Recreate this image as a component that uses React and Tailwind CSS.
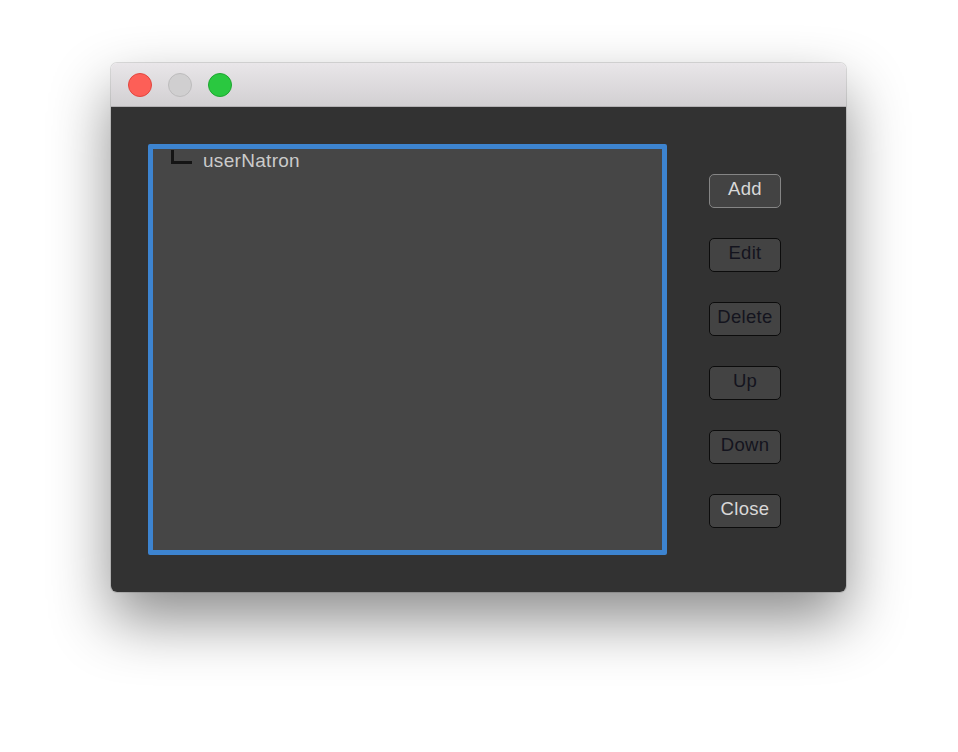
import React from "react";

const buttons = [
  { label: "Add", enabled: true, focus: true },
  { label: "Edit", enabled: false },
  { label: "Delete", enabled: false },
  { label: "Up", enabled: false },
  { label: "Down", enabled: false },
  { label: "Close", enabled: true },
];

const App = () => {
  return (
    <div
      className="w-[958px] h-[752px] bg-white pl-[111px] pt-[63px]"
      style={{ fontFamily: '"Liberation Sans", Arial, sans-serif' }}
    >
      {/* Window */}
      <div className="w-[735px] rounded-[6px] overflow-hidden shadow-[0_28px_60px_rgba(0,0,0,0.45),0_0_0_1px_rgba(0,0,0,0.12)]">
        {/* Title bar */}
        <div className="h-[44px] flex items-center gap-[16px] pl-[17px] bg-gradient-to-b from-[#e9e6e9] to-[#d2d0d2] border-b border-[#b3b1b3]">
          <span className="w-[24px] h-[24px] rounded-full bg-[#fd5f57] border border-[#e2463f]" />
          <span className="w-[24px] h-[24px] rounded-full bg-[#d0cfd0] border border-[#bdbcbd]" />
          <span className="w-[24px] h-[24px] rounded-full bg-[#2ac840] border border-[#1ea630]" />
        </div>

        {/* Content */}
        <div className="bg-[#323232] flex pl-[37px] pt-[37px] pb-[37px]">
          {/* Tree list */}
          <div className="w-[519px] h-[411px] border-[5px] border-[#3d84d0] rounded-[2px] bg-[#464646]">
            <div className="flex items-start pl-[18px]">
              <span className="mt-[1px] w-[21px] h-[14px] border-l-[3px] border-b-[3px] border-[#141414]" />
              <span className="ml-[11px] mt-[1px] text-[19px] leading-[21px] tracking-[0.3px] text-[#cbcbcb]">
                userNatron
              </span>
            </div>
          </div>

          {/* Buttons */}
          <div className="flex flex-col gap-[30px] ml-[42px] pt-[30px]">
            {buttons.map((b) => (
              <button
                key={b.label}
                className={
                  "w-[72px] h-[34px] rounded-[5px] bg-[#434343] text-[18.5px] leading-none tracking-[0.3px] flex items-center justify-center pb-[3px] border-[1.5px] " +
                  (b.focus ? "border-[#858585] " : "border-[#0c0c0c] ") +
                  (b.enabled ? "text-[#d8d8d8]" : "text-[#14141e]")
                }
              >
                {b.label}
              </button>
            ))}
          </div>
        </div>
      </div>
    </div>
  );
};

export default App;
